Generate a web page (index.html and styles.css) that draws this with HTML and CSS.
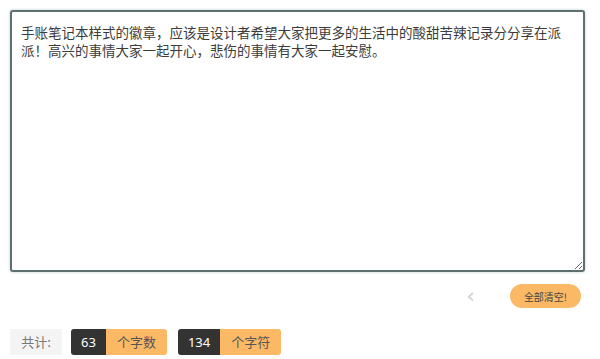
FILE: index.html
```html
<!DOCTYPE html>
<html lang="zh">
<head>
<meta charset="utf-8">
<link rel="stylesheet" href="styles.css">
</head>
<body>
<div class="page">
  <textarea class="editor">手账笔记本样式的徽章，应该是设计者希望大家把更多的生活中的酸甜苦辣记录分分享在派派！高兴的事情大家一起开心，悲伤的事情有大家一起安慰。</textarea>
  <div class="actions">
    <span class="arrow">‹</span>
    <button class="clear">全部清空!</button>
  </div>
  <div class="stats">
    <span class="label">共计:</span>
    <span class="group"><span class="num">63</span><span class="unit">个字数</span></span>
    <span class="group"><span class="num">134</span><span class="unit">个字符</span></span>
  </div>
</div>
</body>
</html>
```
FILE: styles.css
```css
html, body { margin: 0; padding: 0; background: #fff; }
body { font-family: "Noto Sans CJK SC", sans-serif; }
.page { padding: 10px 15px 0 10px; }
.editor {
  display: block;
  box-sizing: border-box;
  width: 575px;
  height: 262px;
  margin: 0;
  padding: 11px 14px 8px 9px;
  border: 2px solid #5d6f6f;
  border-radius: 3px;
  box-shadow: 0 0 3px rgba(120, 160, 170, 0.5);
  font-family: "Noto Sans CJK SC", sans-serif;
  font-size: 13.5px;
  line-height: 18px;
  color: #3c3c3c;
  resize: vertical;
  outline: none;
}
.actions {
  display: flex;
  justify-content: flex-end;
  align-items: center;
  margin-top: 12px;
  height: 24px;
  padding-right: 4px;
}
.arrow {
  color: #d0d0d0;
  font-size: 22px;
  line-height: 24px;
  margin-right: 35px;
  font-family: "DejaVu Sans", sans-serif;
}
.clear {
  border: none;
  background: #fbb965;
  color: #444;
  border-radius: 12px;
  height: 24px;
  width: 71px;
  padding: 0;
  font-family: "Noto Sans CJK SC", sans-serif;
  font-size: 10px;
}
.stats {
  display: flex;
  align-items: center;
  margin-top: 21px;
}
.label {
  background: #f4f4f5;
  color: #777;
  font-size: 13px;
  height: 26px;
  line-height: 26px;
  width: 52px;
  margin-right: 9px;
  text-align: center;
}
.group {
  display: flex;
  height: 26px;
  border-radius: 3px;
  overflow: hidden;
  font-size: 13px;
  line-height: 26px;
  margin-right: 11px;
}
.num {
  background: #333;
  color: #fff;
  padding: 0 10px;
  font-family: "Noto Sans", sans-serif;
}
.unit {
  background: #fbb965;
  color: #555;
  padding: 0 11px;
}
```
